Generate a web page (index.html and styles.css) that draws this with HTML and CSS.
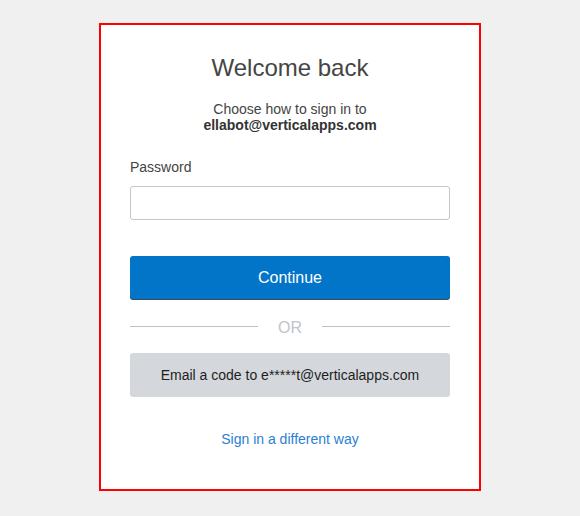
FILE: index.html
```html
<!DOCTYPE html>
<html lang="en">
<head>
<meta charset="utf-8">
<title>Welcome back</title>
<link rel="stylesheet" href="styles.css">
</head>
<body>
  <main class="card">
    <h1 class="title">Welcome back</h1>
    <p class="subtitle">Choose how to sign in to<br><strong>ellabot@verticalapps.com</strong></p>
    <label class="label" for="pw">Password</label>
    <input class="input" id="pw" type="password">
    <button class="btn btn-primary" type="button">Continue</button>
    <div class="divider"><span class="line"></span><span class="or">OR</span><span class="line"></span></div>
    <button class="btn btn-secondary" type="button">Email a code to e*****t@verticalapps.com</button>
    <a class="link" href="#">Sign in a different way</a>
  </main>
</body>
</html>
```

FILE: styles.css
```css
* { box-sizing: border-box; }
html, body { margin: 0; padding: 0; }
body {
  background: #f0f0f0;
  font-family: "Liberation Sans", Arial, sans-serif;
  padding-top: 23px;
  height: 516px;
  overflow: hidden;
}
.card {
  width: 382px;
  height: 468px;
  margin: 0 auto;
  background: #ffffff;
  border: 2px solid #ff0000;
  padding: 29px 29px 0;
  display: flex;
  flex-direction: column;
}
.title {
  margin: 0;
  font-size: 24px;
  line-height: 28px;
  font-weight: normal;
  color: #454545;
  text-align: center;
}
.subtitle {
  margin: 19px 0 0;
  font-size: 14px;
  line-height: 16px;
  color: #444444;
  text-align: center;
}
.subtitle strong { color: #333333; }
.label {
  margin-top: 26px;
  font-size: 14px;
  line-height: 16px;
  color: #444444;
}
.input {
  margin-top: 11px;
  height: 34px;
  width: 100%;
  border: 1px solid #c6c6c6;
  border-radius: 3px;
  background: #fff;
  font: inherit;
  padding: 0 10px;
}
.btn {
  width: 100%;
  height: 44px;
  border: none;
  border-radius: 3px;
  font-family: "Liberation Sans", Arial, sans-serif;
  display: flex;
  align-items: center;
  justify-content: center;
  padding: 0;
}
.btn-primary {
  margin-top: 36px;
  background: #0275c8;
  color: #ffffff;
  font-size: 16px;
  height: 43px;
  box-shadow: 0 1px 0 #3b4a57;
}
.divider {
  margin-top: 18px;
  display: flex;
  align-items: center;
  height: 18px;
}
.line {
  flex: 1;
  height: 1px;
  background: #bcc2cc;
}
.or {
  margin: 0 20px;
  font-size: 16px;
  line-height: 18px;
  color: #c0c4cc;
  position: relative;
  top: 2px;
}
.btn-secondary {
  margin-top: 18px;
  background: #d4d7db;
  color: #1e1e1e;
  font-size: 14px;
}
.link {
  margin-top: 34px;
  align-self: center;
  font-size: 14px;
  line-height: 16px;
  color: #2a80d4;
  text-decoration: none;
}
```
